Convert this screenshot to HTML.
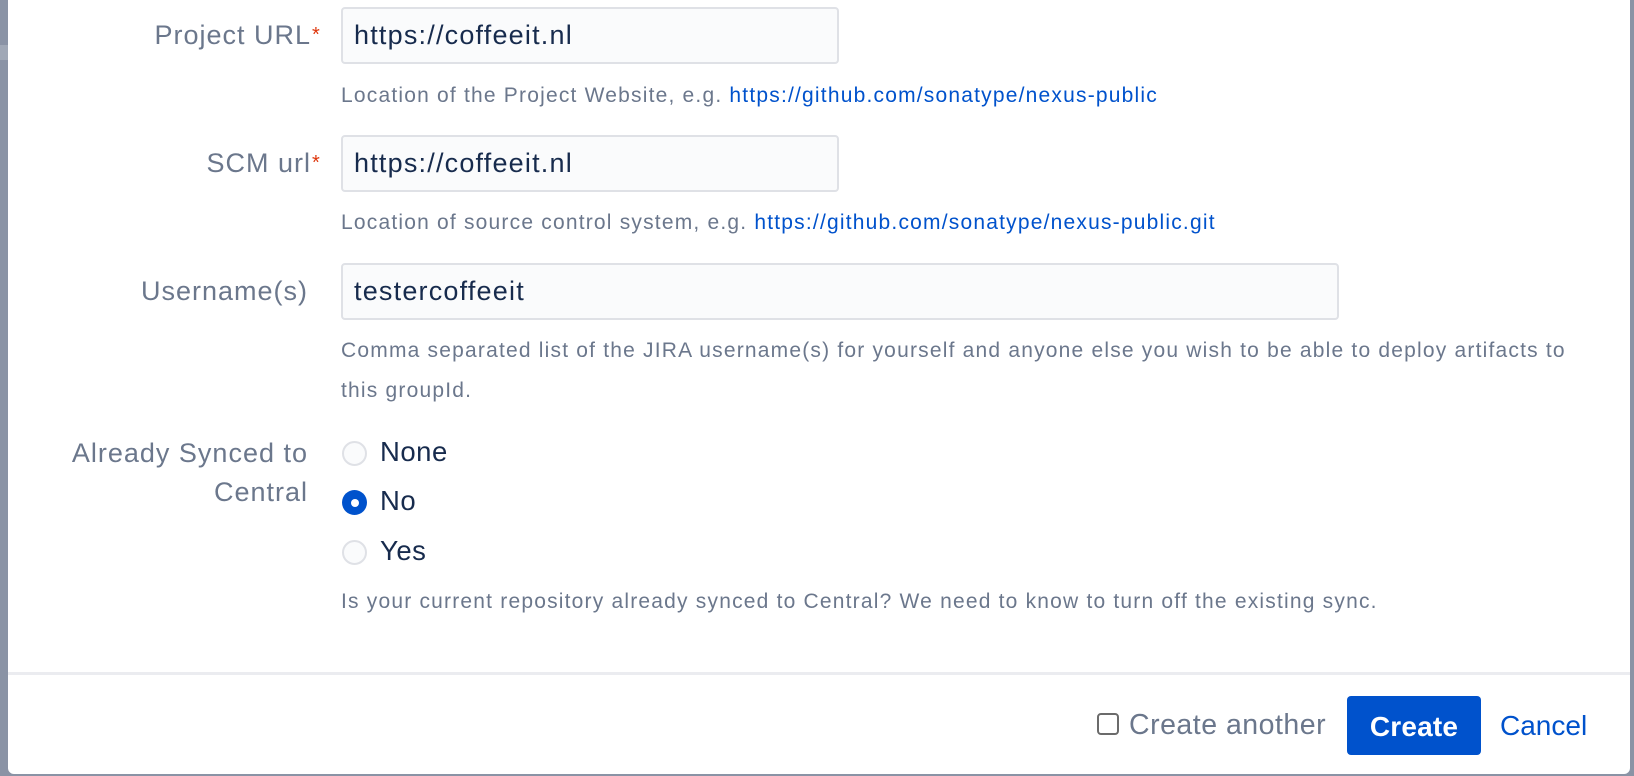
<!DOCTYPE html>
<html><head><meta charset="utf-8"><style>
*{margin:0;padding:0;box-sizing:border-box}
body{width:1634px;height:776px;background:#8a93a5;position:relative;overflow:hidden;font-family:"Liberation Sans",sans-serif}
.a{position:absolute}
.lbl{position:absolute;right:1323px;font-size:27px;color:#6b778c;text-align:right;white-space:nowrap;letter-spacing:1px}
.req{color:#de350b;font-size:20px;position:absolute;left:100%;top:4px;margin-left:1px}
.inp{position:absolute;left:341px;width:498px;height:57px;background:#fafbfc;border:2px solid #dfe1e6;border-radius:4px;font-size:27px;color:#172b4d;padding-left:11px;line-height:53px;letter-spacing:1.2px}
.help{position:absolute;left:341px;font-size:21px;color:#6b778c;letter-spacing:1.2px;white-space:nowrap}
.help a{color:#0052cc;text-decoration:none}
.rad{position:absolute;left:342px;width:25px;height:25px;border-radius:50%;background:#fafbfc;border:2.5px solid #dfe1e6}
.rad.on{background:#0052cc;border:none}
.rad.on::after{content:"";position:absolute;left:8.5px;top:8.5px;width:8px;height:8px;border-radius:50%;background:#fff}
.rl{position:absolute;left:380px;font-size:27.5px;color:#172b4d;letter-spacing:0.5px}
</style></head><body>
<div class="a" style="left:0;top:45px;width:8px;height:15px;background:#a0a8b6"></div>
<div class="a" style="left:8px;top:0;width:1622px;height:774px;background:#fff;border-radius:0 0 6px 6px"></div>

<div class="lbl" style="top:20px">Project URL<span class="req">*</span></div>
<div class="inp" style="top:7px">https://coffeeit.nl</div>
<div class="help" style="top:84px">Location of the Project Website, e.g. <a>https://github.com/sonatype/nexus-public</a></div>

<div class="lbl" style="top:148px">SCM url<span class="req">*</span></div>
<div class="inp" style="top:135px">https://coffeeit.nl</div>
<div class="help" style="top:211px">Location of source control system, e.g. <a>https://github.com/sonatype/nexus-public.git</a></div>

<div class="lbl" style="top:276px;right:1326px">Username(s)</div>
<div class="inp" style="top:263px;width:998px">testercoffeeit</div>
<div class="help" style="line-height:40px;top:331px">Comma separated list of the JIRA username(s) for yourself and anyone else you wish to be able to deploy artifacts to<br>this groupId.</div>

<div class="lbl" style="top:434px;right:1326px;line-height:39px">Already Synced to<br>Central</div>
<div class="rad" style="top:441px"></div><div class="rl" style="top:436px">None</div>
<div class="rad on" style="top:490px"></div><div class="rl" style="top:485px">No</div>
<div class="rad" style="top:540px"></div><div class="rl" style="top:535px">Yes</div>
<div class="help" style="top:590px">Is your current repository already synced to Central? We need to know to turn off the existing sync.</div>

<div class="a" style="left:8px;top:672px;width:1622px;height:3px;background:#ebecf0"></div>
<div class="a" style="left:1097px;top:713px;width:22px;height:22px;border:2px solid #6b6b6b;border-radius:4px;background:#fff"></div>
<div class="a" style="left:1129px;top:709px;font-size:28.5px;color:#6b778c;letter-spacing:0.5px">Create another</div>
<div class="a" style="left:1347px;top:696px;width:134px;height:59px;background:#0052cc;border-radius:4px;color:#fff;font-size:28px;font-weight:bold;text-align:center;line-height:62px;letter-spacing:0.2px">Create</div>
<div class="a" style="left:1500px;top:710px;font-size:28px;color:#0052cc">Cancel</div>
</body></html>
